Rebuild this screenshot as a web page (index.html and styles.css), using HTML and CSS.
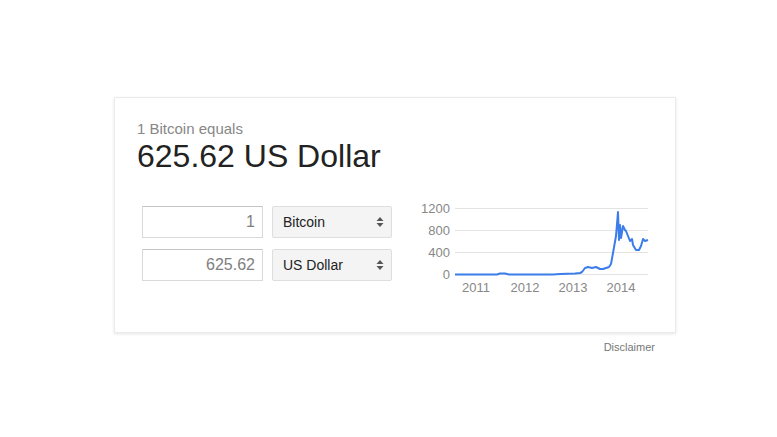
FILE: index.html
```html
<!DOCTYPE html>
<html lang="en">
<head>
  <meta charset="UTF-8">
  <title>Currency Converter</title>
  <link rel="stylesheet" href="styles.css">
</head>
<body>
  <div class="wrap">
    <div class="card">
      <div class="subtitle">1 Bitcoin equals</div>
      <div class="amount">625.62 US Dollar</div>

      <div class="converter">
        <div class="form">
          <div class="row">
            <input class="value" value="1">
            <div class="select">
              <span>Bitcoin</span>
              <svg class="arrows" width="8" height="12" viewBox="0 0 8 12"><path d="M4 1 L7.5 5 L0.5 5 Z M4 11 L7.5 7 L0.5 7 Z" fill="#555"/></svg>
            </div>
          </div>
          <div class="row">
            <input class="value" value="625.62">
            <div class="select">
              <span>US Dollar</span>
              <svg class="arrows" width="8" height="12" viewBox="0 0 8 12"><path d="M4 1 L7.5 5 L0.5 5 Z M4 11 L7.5 7 L0.5 7 Z" fill="#555"/></svg>
            </div>
          </div>
        </div>

        <svg class="chart" width="243" height="95" viewBox="0 0 243 95">
          <g stroke="#e3e3e3" stroke-width="1">
            <line x1="40" y1="8.5" x2="233" y2="8.5"/>
            <line x1="40" y1="30.5" x2="233" y2="30.5"/>
            <line x1="40" y1="52.5" x2="233" y2="52.5"/>
            <line x1="40" y1="74.5" x2="233" y2="74.5"/>
          </g>
          <g class="axis" text-anchor="end">
            <text x="35" y="13">1200</text>
            <text x="35" y="35">800</text>
            <text x="35" y="57">400</text>
            <text x="35" y="79">0</text>
          </g>
          <g class="axis" text-anchor="middle">
            <text x="61" y="92">2011</text>
            <text x="110" y="92">2012</text>
            <text x="158" y="92">2013</text>
            <text x="206" y="92">2014</text>
          </g>
          <polyline fill="none" stroke="#3b7de9" stroke-width="2" stroke-linejoin="round"
            points="40,74.5 82,74.5 85,73.5 90,73.5 94,74.5 138,74.5 145,74 160,73.5 165,73 167,72 170,68 173,67 177,68 181,67 185,69 188,69 191,68 194,67 196,64 198,53 201,36 203,12 204,40 205,25 206,38 207,32 208,26 210,30 211,31 213,36 215,41 217,39 218,45 221,50 224,50 226,46 228,39 230,41 233,40"/>
        </svg>
      </div>
    </div>
    <div class="disclaimer">Disclaimer</div>
  </div>
</body>
</html>
```

FILE: styles.css
```css
body {
  margin: 0;
  background: #fff;
  font-family: "Liberation Sans", Arial, sans-serif;
}
.wrap {
  width: 562px;
  padding: 97px 0 0 114px;
}
.card {
  box-sizing: border-box;
  width: 562px;
  height: 236px;
  padding: 22px 16px 0 22px;
  border: 1px solid #ebebeb;
  box-shadow: 0 1px 3px rgba(0,0,0,0.1);
}
.subtitle {
  font-size: 15px;
  line-height: 18px;
  color: #878787;
}
.amount {
  font-size: 32px;
  line-height: 36px;
  color: #222;
}
.converter {
  display: flex;
  align-items: flex-start;
  margin-top: 26px;
}
.form {
  display: flex;
  flex-direction: column;
  gap: 11px;
  margin: 6px 0 0 5px;
}
.row {
  display: flex;
  gap: 9px;
}
.value {
  box-sizing: border-box;
  width: 121px;
  height: 32px;
  padding: 0 7px;
  border: 1px solid #d9d9d9;
  border-top-color: #c4c4c4;
  border-radius: 1px;
  font-family: inherit;
  font-size: 16px;
  color: #808080;
  text-align: right;
}
.select {
  box-sizing: border-box;
  width: 120px;
  height: 32px;
  padding: 0 7px 0 10px;
  display: flex;
  align-items: center;
  justify-content: space-between;
  background: #f4f4f4;
  border: 1px solid #dedede;
  border-radius: 2px;
  font-size: 14px;
  color: #222;
}
.chart {
  flex-shrink: 0;
  margin-left: 23px;
}
.axis {
  font-size: 13px;
  fill: #888;
}
.disclaimer {
  padding: 8px 21px 0 0;
  text-align: right;
  font-size: 11px;
  color: #777;
}
```
